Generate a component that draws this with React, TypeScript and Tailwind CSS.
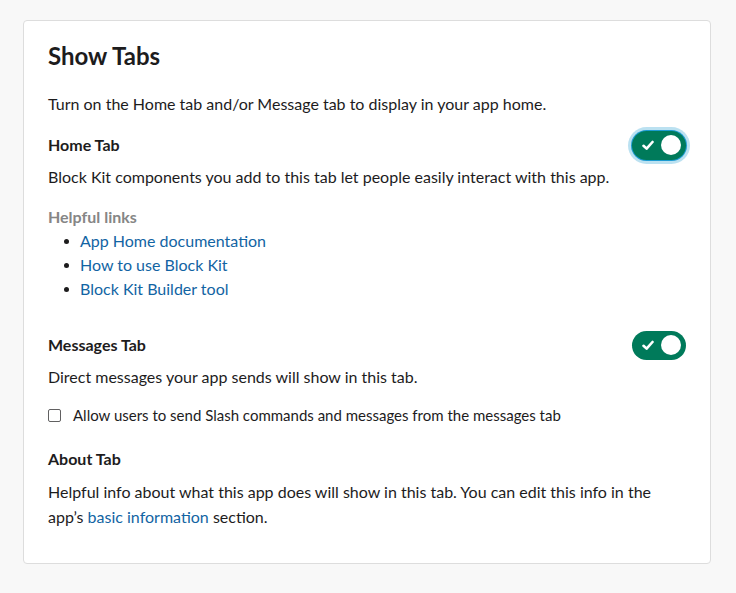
import React, { useState } from 'react';

const Toggle: React.FC<{ on: boolean; focused?: boolean; onClick: () => void }> = ({ on, focused, onClick }) => (
  <button
    onClick={onClick}
    className={`relative flex items-center w-[54px] h-[29px] rounded-full shrink-0 ${
      on ? 'bg-[#007a5a]' : 'bg-[#868686]'
    } ${focused ? 'ring-4 ring-[#1d9bd1]/30 shadow-[0_0_0_1px_#1d9bd1]' : ''}`}
  >
    {on && (
      <svg className="absolute left-[10px] top-[9px]" width="12" height="11" viewBox="0 0 12 11">
        <path d="M1.5 5.8 L4.6 8.6 L10.5 2" fill="none" stroke="white" strokeWidth="2.6" strokeLinecap="round" strokeLinejoin="round" />
      </svg>
    )}
    <span
      className={`absolute top-[4.5px] w-[20px] h-[20px] rounded-full bg-white ${on ? 'right-[5px]' : 'left-[5px]'}`}
    />
  </button>
);

const links = ['App Home documentation', 'How to use Block Kit', 'Block Kit Builder tool'];

export default function App() {
  const [home, setHome] = useState(true);
  const [messages, setMessages] = useState(true);
  const [slash, setSlash] = useState(false);

  return (
    <div
      className="min-h-[593px] bg-[#f8f8f8] pt-[20px] pl-[23px] pr-[25px] text-[16px] text-[#1d1c1d]"
      style={{ fontFamily: 'Lato, "Noto Sans", sans-serif' }}
    >
      <div className="bg-white border border-[#dddddd] rounded-[4px] px-[24px] pt-[21px] pb-[34px]">
        <h1 className="text-[24px] leading-[28px] font-bold">Show Tabs</h1>
        <p className="mt-[23px] leading-[22px]">
          Turn on the Home tab and/or Message tab to display in your app home.
        </p>

        {/* Home Tab */}
        <div className="mt-[19px] flex items-center justify-between h-[22px]">
          <h2 className="font-bold leading-[22px]">Home Tab</h2>
          <Toggle on={home} focused onClick={() => setHome(!home)} />
        </div>
        <p className="mt-[10px] leading-[22px]">
          Block Kit components you add to this tab let people easily interact with this app.
        </p>
        <div className="mt-[18px] font-bold text-[#868686] leading-[22px]">Helpful links</div>
        <ul className="mt-[1px] pl-[16px]">
          {links.map((l) => (
            <li key={l} className="flex items-center leading-[24px]">
              <span className="w-[5px] h-[5px] rounded-full bg-[#1d1c1d] mr-[11px]" />
              <a href="#" className="text-[#1264a3]">
                {l}
              </a>
            </li>
          ))}
        </ul>

        {/* Messages Tab */}
        <div className="mt-[33px] flex items-center justify-between h-[22px]">
          <h2 className="font-bold leading-[22px]">Messages Tab</h2>
          <Toggle on={messages} onClick={() => setMessages(!messages)} />
        </div>
        <p className="mt-[10px] leading-[22px]">Direct messages your app sends will show in this tab.</p>
        <label className="mt-[16px] flex items-center leading-[22px] text-[15px] cursor-pointer">
          <input
            type="checkbox"
            checked={slash}
            onChange={() => setSlash(!slash)}
            className="appearance-none w-[13px] h-[13px] border border-[#616061] rounded-[2px] mr-[12px] checked:bg-[#1264a3]"
          />
          Allow users to send Slash commands and messages from the messages tab
        </label>

        {/* About Tab */}
        <h2 className="mt-[22px] font-bold leading-[22px]">About Tab</h2>
        <p className="mt-[9px] leading-[25px]">
          Helpful info about what this app does will show in this tab. You can edit this info in the app’s{' '}
          <a href="#" className="text-[#1264a3]">basic information</a> section.
        </p>
      </div>
    </div>
  );
}
